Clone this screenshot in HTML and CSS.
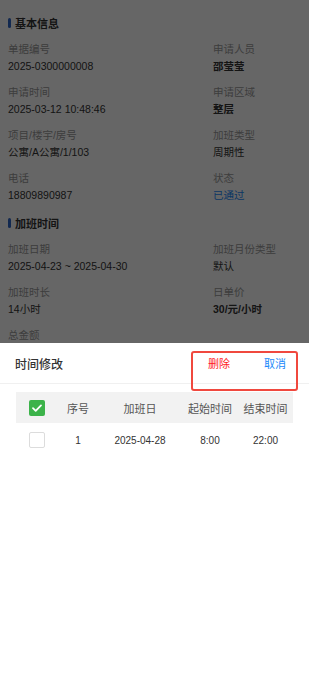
FILE: index.html
```html
<!DOCTYPE html>
<html lang="zh-CN">
<head>
  <meta charset="UTF-8">
  <meta name="viewport" content="width=device-width, initial-scale=1.0">
  <title>加班详情</title>
  <link rel="stylesheet" href="styles.css">
</head>
<body>
  <div class="page">
    <h2 class="sec-title">基本信息</h2>
    <div class="fields">
      <div class="field"><span class="label">单据编号</span><span class="value">2025-0300000008</span></div>
      <div class="field"><span class="label">申请人员</span><span class="value -bold">邵莹莹</span></div>
      <div class="field"><span class="label">申请时间</span><span class="value">2025-03-12 10:48:46</span></div>
      <div class="field"><span class="label">申请区域</span><span class="value -bold">整层</span></div>
      <div class="field"><span class="label">项目/楼宇/房号</span><span class="value">公寓/A公寓/1/103</span></div>
      <div class="field"><span class="label">加班类型</span><span class="value">周期性</span></div>
      <div class="field"><span class="label">电话</span><span class="value">18809890987</span></div>
      <div class="field"><span class="label">状态</span><span class="value -link">已通过</span></div>
    </div>
    <h2 class="sec-title">加班时间</h2>
    <div class="fields">
      <div class="field"><span class="label">加班日期</span><span class="value">2025-04-23 ~ 2025-04-30</span></div>
      <div class="field"><span class="label">加班月份类型</span><span class="value">默认</span></div>
      <div class="field"><span class="label">加班时长</span><span class="value">14小时</span></div>
      <div class="field"><span class="label">日单价</span><span class="value -bold">30/元/小时</span></div>
      <div class="field"><span class="label">总金额</span><span class="value">420元</span></div>
    </div>
  </div>

  <div class="mask"></div>

  <div class="sheet">
    <div class="sheet-head">
      <span class="sheet-title">时间修改</span>
      <div class="actions">
        <span class="btn -danger">删除</span>
        <span class="btn -primary">取消</span>
      </div>
      <div class="mark"></div>
    </div>
    <div class="table">
      <div class="row -head">
        <span class="cell"><i class="check -on"><svg viewBox="0 0 16 16" width="16" height="16"><path d="M4 8.2l2.7 2.6L12 5.4" fill="none" stroke="#fff" stroke-width="1.8" stroke-linecap="round" stroke-linejoin="round"/></svg></i></span>
        <span class="cell">序号</span>
        <span class="cell">加班日</span>
        <span class="cell">起始时间</span>
        <span class="cell">结束时间</span>
      </div>
      <div class="row">
        <span class="cell"><i class="check"></i></span>
        <span class="cell">1</span>
        <span class="cell">2025-04-28</span>
        <span class="cell">8:00</span>
        <span class="cell">22:00</span>
      </div>
    </div>
  </div>
</body>
</html>
```

FILE: styles.css
```css
*, *::before, *::after {
  box-sizing: border-box;
}
body {
  margin: 0;
  background: #fff;
  font-family: Arial, "Liberation Sans", "Noto Sans CJK SC", sans-serif;
  color: #333;
}
.page {
  padding: 13px 8px 0;
}
.sec-title {
  display: flex;
  align-items: center;
  height: 17px;
  margin: 1px 0 10px;
  font-size: 11px;
  font-weight: bold;
  color: #333;
}
.sec-title::before {
  content: '';
  width: 3px;
  height: 10px;
  margin-right: 4px;
  border-radius: 2px;
  background: #2f66c9;
}
.fields {
  display: grid;
  grid-template-columns: 205px 1fr;
}
.field {
  display: flex;
  flex-direction: column;
  padding-bottom: 9px;
}
.label, .value {
  line-height: 17px;
  font-size: 10.5px;
  white-space: nowrap;
}
.label {
  color: #999;
}
.value {
  color: #333;
}
.value.-bold {
  font-weight: bold;
}
.value.-link {
  color: #1989fa;
}
.mask {
  position: fixed;
  inset: 0;
  background: rgba(0, 0, 0, .6);
}
.sheet {
  position: fixed;
  left: 0;
  right: 0;
  bottom: 0;
  height: 343px;
  background: #fff;
}
.sheet-head {
  position: relative;
  display: flex;
  align-items: center;
  justify-content: space-between;
  height: 41px;
  padding: 0 23px 0 15px;
  border-bottom: 1px solid #f0f0f0;
}
.sheet-title {
  font-size: 12px;
  font-weight: 500;
  color: #333;
}
.actions {
  display: flex;
  gap: 34px;
}
.btn {
  font-size: 11px;
  cursor: pointer;
}
.btn.-danger {
  color: #ff1a1a;
}
.btn.-primary {
  color: #1989fa;
}
.mark {
  position: absolute;
  left: 191px;
  top: 8px;
  width: 107px;
  height: 40px;
  border: 2px solid #f0483e;
  border-radius: 3px;
}
.table {
  margin: 8px 16px 0;
}
.row {
  display: grid;
  grid-template-columns: 42px 40px 84px 56px 55px;
  align-items: center;
  height: 34px;
  font-size: 10px;
  color: #333;
}
.row.-head {
  height: 31px;
  background: #f2f2f2;
  font-size: 11px;
  color: #555;
}
.cell {
  display: flex;
  justify-content: center;
  white-space: nowrap;
}
.check {
  display: block;
  width: 16px;
  height: 16px;
  border: 1px solid #dcdcdc;
  border-radius: 2px;
  background: #fff;
}
.check.-on {
  border: 0;
  background: #3cb34a;
}
.check svg {
  display: block;
}
```
